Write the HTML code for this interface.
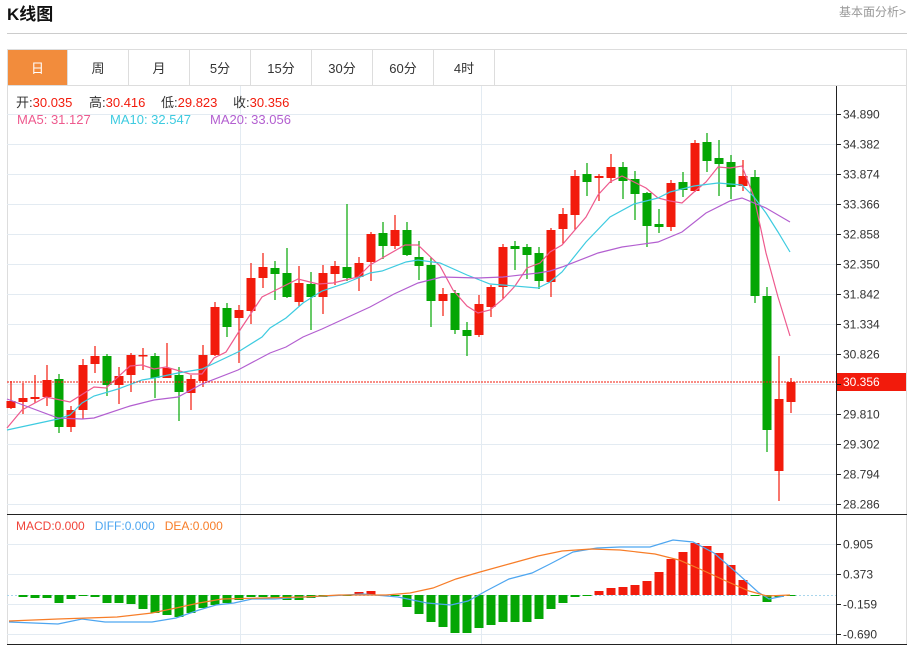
<!DOCTYPE html>
<html><head><meta charset="utf-8"><style>
body{margin:0;width:913px;height:645px;background:#fff;overflow:hidden;font-family:"Liberation Sans","Noto Sans CJK SC",sans-serif;}
svg{position:absolute;left:0;top:0}
</style></head><body>
<svg id="s" width="913" height="645" xmlns="http://www.w3.org/2000/svg" font-family="Liberation Sans, Noto Sans CJK SC, sans-serif">
<text x="7" y="20" font-size="17" font-weight="bold" fill="#111">K线图</text>
<text x="906" y="16" font-size="12" fill="#999" text-anchor="end">基本面分析&gt;</text>
<line x1="7" y1="33.5" x2="907" y2="33.5" stroke="#ccc"/>
<rect x="7.5" y="49.5" width="899" height="595" fill="none" stroke="#ddd"/>
<rect x="8" y="50" width="59" height="35" fill="#f28c3c"/>
<line x1="7" y1="85.5" x2="907" y2="85.5" stroke="#ddd"/>
<g stroke="#ddd">
<line x1="67.5" y1="50" x2="67.5" y2="85"/><line x1="128.5" y1="50" x2="128.5" y2="85"/><line x1="189.5" y1="50" x2="189.5" y2="85"/><line x1="250.5" y1="50" x2="250.5" y2="85"/><line x1="311.5" y1="50" x2="311.5" y2="85"/><line x1="372.5" y1="50" x2="372.5" y2="85"/><line x1="433.5" y1="50" x2="433.5" y2="85"/><line x1="494.5" y1="50" x2="494.5" y2="85"/>
</g>
<g font-size="13" fill="#333" text-anchor="middle">
<text x="37.5" y="73" fill="#fff">日</text><text x="98" y="73">周</text><text x="159" y="73">月</text><text x="220" y="73">5分</text><text x="281" y="73">15分</text><text x="342" y="73">30分</text><text x="403" y="73">60分</text><text x="464" y="73">4时</text>
</g>
<g id="grid" stroke="#e3ebf2"></g>
<g font-size="13" fill="#333">
<text x="16" y="107">开:<tspan fill="#f21b0c">30.035</tspan></text>
<text x="89" y="107">高:<tspan fill="#f21b0c">30.416</tspan></text>
<text x="161" y="107">低:<tspan fill="#f21b0c">29.823</tspan></text>
<text x="233" y="107">收:<tspan fill="#f21b0c">30.356</tspan></text>
<text x="17" y="124" fill="#ee5a8e">MA5: 31.127</text>
<text x="110" y="124" fill="#3ecbe0">MA10: 32.547</text>
<text x="210" y="124" fill="#b35fd0">MA20: 33.056</text>
</g>
<text x="16" y="530" font-size="12" xml:space="preserve"><tspan fill="#f0443a">MACD:0.000</tspan>   <tspan fill="#4ea6f0">DIFF:0.000</tspan>   <tspan fill="#f77d28">DEA:0.000</tspan></text>
<g id="c"></g>
<line x1="7" y1="382" x2="836" y2="382" stroke="#f21b0c" stroke-dasharray="2,1" stroke-width="1"/>
<rect x="837" y="373" width="69" height="18" fill="#f21b0c"/>
<text x="843" y="386" font-size="12" fill="#fff">30.356</text>
<line x1="7" y1="514.5" x2="907" y2="514.5" stroke="#222"/>
<line x1="7" y1="644.5" x2="907" y2="644.5" stroke="#222"/>
<line x1="836.5" y1="86" x2="836.5" y2="644" stroke="#222"/>
<g id="ax" font-size="12" fill="#333"></g>
</svg>
<script>
var NS="http://www.w3.org/2000/svg";
function el(p,t,a){var e=document.createElementNS(NS,t);for(var k in a)e.setAttribute(k,a[k]);p.appendChild(e);return e;}
var g=document.getElementById('grid'),c=document.getElementById('c'),ax=document.getElementById('ax');
var labs=["34.890","34.382","33.874","33.366","32.858","32.350","31.842","31.334","30.826","","29.810","29.302","28.794","28.286"];
for(var i=0;i<14;i++){var y=114+30*i+.5;el(g,'line',{x1:7,y1:y,x2:836,y2:y});el(ax,'line',{x1:836,y1:y,x2:841,y2:y,stroke:'#222'});if(labs[i]){var t=el(ax,'text',{x:843,y:y+4});t.textContent=labs[i];}}
var ml=[["0.905",544],["0.373",574],["-0.159",604],["-0.690",634]];
ml.forEach(function(m){var y=m[1]+.5;el(g,'line',{x1:7,y1:y,x2:836,y2:y});el(ax,'line',{x1:836,y1:y,x2:841,y2:y,stroke:'#222'});var t=el(ax,'text',{x:843,y:y+4});t.textContent=m[0];});
[240,481,731].forEach(function(x){el(g,'line',{x1:x+.5,y1:86,x2:x+.5,y2:644});});
el(c,'line',{x1:7,y1:595.5,x2:836,y2:595.5,stroke:'#a9d6ec','stroke-dasharray':'2,2'});
var d=[[401,408,381,409,'r'],[398,402,383,414,'r'],[397,399,375,403,'r'],[380,397,365,406,'r'],[379,427,374,433,'g'],[410,427,406,432,'r'],[365,410,359,419,'r'],[356,364,346,373,'r'],[356,385,354,396,'g'],[376,385,367,404,'r'],[355,375,353,392,'r'],[355,356,348,370,'r'],[356,378,353,398,'g'],[368,378,343,378,'r'],[375,392,367,421,'g'],[379,393,375,410,'r'],[355,381,345,387,'r'],[307,355,302,356,'r'],[308,327,303,337,'g'],[310,318,305,363,'r'],[278,311,263,324,'r'],[267,278,253,288,'r'],[268,274,261,300,'g'],
[273,297,248,298,'g'],[283,302,266,306,'r'],[284,297,272,330,'g'],[273,297,265,314,'r'],[266,274,261,285,'r'],[267,278,204,281,'g'],[263,277,257,291,'r'],[234,262,232,281,'r'],[233,246,222,259,'g'],[230,246,215,249,'r'],[230,255,222,256,'g'],[257,266,241,280,'g'],[265,301,257,327,'g'],[294,301,288,316,'r'],[293,330,290,334,'g'],[330,336,322,356,'g'],[304,335,295,337,'r'],[287,307,285,317,'r'],[247,287,244,299,'r'],[246,249,241,270,'g'],[247,255,244,279,'g'],[253,281,247,289,'g'],[230,282,228,297,'r'],
[214,229,208,244,'r'],[176,215,170,230,'r'],[174,182,163,196,'g'],[176,178,174,201,'r'],[167,178,154,183,'r'],[167,181,162,199,'g'],[179,194,171,220,'g'],[193,226,192,247,'g'],[224,227,209,233,'g'],[183,227,180,231,'r'],[182,190,172,197,'g'],[143,191,140,192,'r'],[142,161,133,172,'g'],[158,164,140,196,'g'],[162,187,155,199,'g'],[176,186,160,191,'r'],[177,296,170,303,'g'],[296,430,287,452,'g'],[399,471,356,501,'r'],[382,402,378,413,'r']];
var R='#f21b0c',G='#04a604';
d.forEach(function(k,i){var x=11+12*i,col=k[4]=='r'?R:G;el(c,'line',{x1:x,y1:k[2],x2:x,y2:k[3],stroke:col,'stroke-width':1.2});el(c,'rect',{x:x-4.5,y:k[0],width:9,height:Math.max(1.5,k[1]-k[0]),fill:col});});
var h=[0,597,598,598,603,599,596,597,603,603,604,609,613,615,617,613,608,605,603,600,597,597,598,600,600,598,597,596,595,592,591,595,596,607,614,622,627,633,633,628,625,622,622,622,619,609,603,597,596,591,588,587,585,581,572,559,552,543,546,553,565,580,595,602,597,595];
h.forEach(function(y,i){if(!y)return;var x=11+12*i;var top=Math.min(y,595),ht=Math.abs(y-595);if(ht<1)ht=1;el(c,'rect',{x:x-4.5,y:top,width:9,height:ht,fill:y<595?R:G});});
function pl(pts,col){el(c,'polyline',{points:pts,fill:'none',stroke:col,'stroke-width':1.2});}
pl("7,428 22,410 46,397 70,402 94,387 106,388 130,366 142,365 154,369 166,367 190,374 202,374 214,358 226,352 238,333 250,315 262,297 270,293 298,279 318,284 333,283 358,277 370,265 405,245 418,245 440,266 453,290 467,306 478,313 490,310 503,299 515,286 527,268 540,263 550,252 562,245 586,217 598,195 610,182 622,176 634,182 646,188 658,198 670,201 682,203 694,192 706,182 718,167 730,168 742,166 754,197 766,253 778,297 790,336",'#ee5a8e');
pl("7,430 58,419 70,415 82,403 94,396 118,389 142,380 154,378 178,373 202,369 238,352 262,337 270,328 286,318 303,303 322,291 346,283 370,273 382,271 406,262 418,260 440,263 467,275 490,284 503,285 538,288 550,282 562,272 586,242 610,217 634,204 658,198 670,192 694,186 718,183 730,184 742,185 754,197 766,213 778,232 790,252",'#3ecbe0');
pl("7,399 58,418 82,419 94,418 130,406 154,400 178,397 202,384 238,370 270,353 286,347 303,337 322,329 346,318 370,307 394,294 418,283 442,277 478,278 503,277 538,273 550,271 562,267 598,253 622,247 658,242 682,232 706,213 730,201 742,198 766,208 790,222",'#b35fd0');
pl("9,622 58,624 82,619 105,622 152,622 176,618 199,610 216,605 234,603 252,599 275,599 304,597 328,596 363,594 398,597 427,603 451,605 468,601 486,591 509,579 532,573 550,564 573,552 597,548 620,547 650,547 673,540 693,542 714,553 737,573 758,592 769,599 784,596",'#4ea6f0');
pl("9,621 58,619 117,617 152,613 176,608 199,603 222,599 263,598 304,597 339,595 386,595 410,593 433,588 456,579 480,572 509,564 538,556 562,551 591,549 620,550 655,554 679,560 702,570 726,581 749,591 767,596 790,595",'#f77d28');
</script>
</body></html>
